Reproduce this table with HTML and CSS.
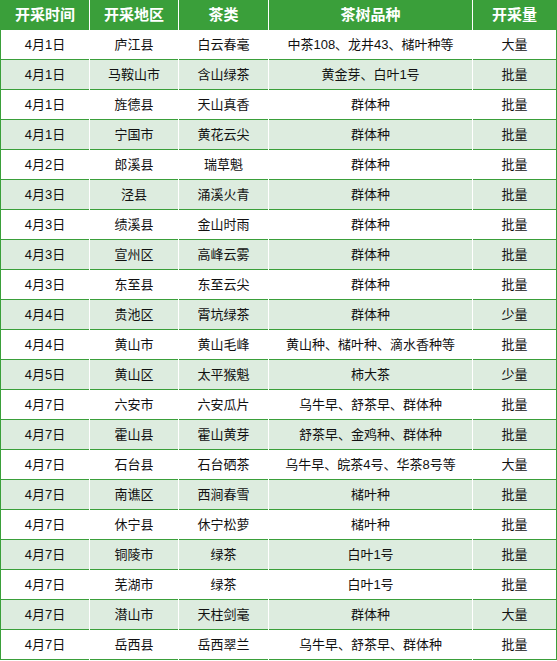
FILE: index.html
```html
<!DOCTYPE html>
<html lang="zh">
<head>
<meta charset="utf-8">
<title>开采时间表</title>
<link rel="stylesheet" href="styles.css">
</head>
<body>
<div class="table">
  <div class="row head">
    <div class="cell">开采时间</div><div class="cell">开采地区</div><div class="cell">茶类</div><div class="cell">茶树品种</div><div class="cell">开采量</div>
  </div>
  <div class="row"><div class="cell">4月1日</div><div class="cell">庐江县</div><div class="cell">白云春毫</div><div class="cell">中茶108、龙井43、槠叶种等</div><div class="cell">大量</div></div>
  <div class="row alt"><div class="cell">4月1日</div><div class="cell">马鞍山市</div><div class="cell">含山绿茶</div><div class="cell">黄金芽、白叶1号</div><div class="cell">批量</div></div>
  <div class="row"><div class="cell">4月1日</div><div class="cell">旌德县</div><div class="cell">天山真香</div><div class="cell">群体种</div><div class="cell">批量</div></div>
  <div class="row alt"><div class="cell">4月1日</div><div class="cell">宁国市</div><div class="cell">黄花云尖</div><div class="cell">群体种</div><div class="cell">批量</div></div>
  <div class="row"><div class="cell">4月2日</div><div class="cell">郎溪县</div><div class="cell">瑞草魁</div><div class="cell">群体种</div><div class="cell">批量</div></div>
  <div class="row alt"><div class="cell">4月3日</div><div class="cell">泾县</div><div class="cell">涌溪火青</div><div class="cell">群体种</div><div class="cell">批量</div></div>
  <div class="row"><div class="cell">4月3日</div><div class="cell">绩溪县</div><div class="cell">金山时雨</div><div class="cell">群体种</div><div class="cell">批量</div></div>
  <div class="row alt"><div class="cell">4月3日</div><div class="cell">宣州区</div><div class="cell">高峰云雾</div><div class="cell">群体种</div><div class="cell">批量</div></div>
  <div class="row"><div class="cell">4月3日</div><div class="cell">东至县</div><div class="cell">东至云尖</div><div class="cell">群体种</div><div class="cell">批量</div></div>
  <div class="row alt"><div class="cell">4月4日</div><div class="cell">贵池区</div><div class="cell">霄坑绿茶</div><div class="cell">群体种</div><div class="cell">少量</div></div>
  <div class="row"><div class="cell">4月4日</div><div class="cell">黄山市</div><div class="cell">黄山毛峰</div><div class="cell">黄山种、槠叶种、滴水香种等</div><div class="cell">批量</div></div>
  <div class="row alt"><div class="cell">4月5日</div><div class="cell">黄山区</div><div class="cell">太平猴魁</div><div class="cell">柿大茶</div><div class="cell">少量</div></div>
  <div class="row"><div class="cell">4月7日</div><div class="cell">六安市</div><div class="cell">六安瓜片</div><div class="cell">乌牛早、舒茶早、群体种</div><div class="cell">批量</div></div>
  <div class="row alt"><div class="cell">4月7日</div><div class="cell">霍山县</div><div class="cell">霍山黄芽</div><div class="cell">舒茶早、金鸡种、群体种</div><div class="cell">批量</div></div>
  <div class="row"><div class="cell">4月7日</div><div class="cell">石台县</div><div class="cell">石台硒茶</div><div class="cell">乌牛早、皖茶4号、华茶8号等</div><div class="cell">大量</div></div>
  <div class="row alt"><div class="cell">4月7日</div><div class="cell">南谯区</div><div class="cell">西涧春雪</div><div class="cell">槠叶种</div><div class="cell">批量</div></div>
  <div class="row"><div class="cell">4月7日</div><div class="cell">休宁县</div><div class="cell">休宁松萝</div><div class="cell">槠叶种</div><div class="cell">批量</div></div>
  <div class="row alt"><div class="cell">4月7日</div><div class="cell">铜陵市</div><div class="cell">绿茶</div><div class="cell">白叶1号</div><div class="cell">批量</div></div>
  <div class="row"><div class="cell">4月7日</div><div class="cell">芜湖市</div><div class="cell">绿茶</div><div class="cell">白叶1号</div><div class="cell">批量</div></div>
  <div class="row alt"><div class="cell">4月7日</div><div class="cell">潜山市</div><div class="cell">天柱剑毫</div><div class="cell">群体种</div><div class="cell">大量</div></div>
  <div class="row"><div class="cell">4月7日</div><div class="cell">岳西县</div><div class="cell">岳西翠兰</div><div class="cell">乌牛早、舒茶早、群体种</div><div class="cell">批量</div></div>
</div>
</body>
</html>
```

FILE: styles.css
```css
html, body {
  margin: 0;
  padding: 0;
  background: #ffffff;
}

.table {
  width: 557px;
  box-sizing: border-box;
  border-left: 1px solid #3a9f3a;
  border-right: 1px solid #3a9f3a;
  font-family: "Liberation Sans", "Noto Sans CJK SC", sans-serif;
  font-size: 13px;
  color: #111111;
}

.row {
  display: grid;
  grid-template-columns: 88px 88px 89px 203px 83px;
  column-gap: 1px;
  background: #ffffff;
}

.cell {
  height: 30px;
  box-sizing: border-box;
  border-bottom: 1px solid #3a9f3a;
  display: flex;
  align-items: center;
  justify-content: center;
  line-height: 16px;
  white-space: nowrap;
}

.alt .cell {
  background: #ddecdf;
}

.head .cell {
  background: #3a9f3a;
  border-bottom: none;
  color: #ffffff;
  font-weight: bold;
  font-size: 15px;
}
```
